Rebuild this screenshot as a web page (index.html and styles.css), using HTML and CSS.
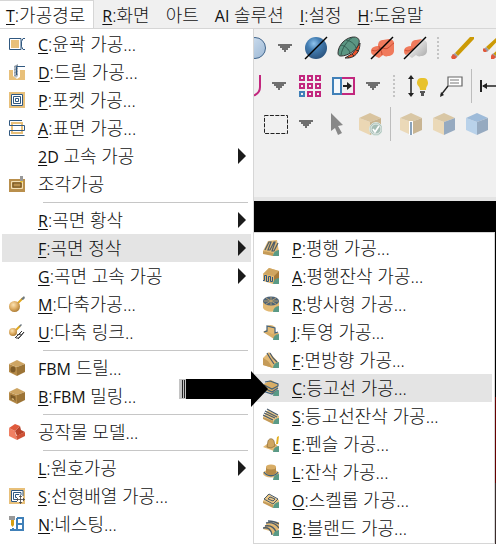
FILE: index.html
```html
<!DOCTYPE html>
<html lang="ko">
<head>
    <meta charset="UTF-8">
    <meta name="viewport" content="width=device-width, initial-scale=1.0">
    <title>가공경로</title>
    <link rel="stylesheet" href="styles.css">
</head>
<body>
    <!-- shared shapes -->
    <svg class="defs" aria-hidden="true">
        <defs>
            <radialGradient id="blueBall" cx="0.4" cy="0.3" r="0.7">
                <stop offset="0" stop-color="#8fc4ee"/>
                <stop offset="0.4" stop-color="#4580b5"/>
                <stop offset="1" stop-color="#2c5580"/>
            </radialGradient>
            <radialGradient id="tanBall" cx="0.4" cy="0.35" r="0.7">
                <stop offset="0" stop-color="#fbe3b4"/>
                <stop offset="0.5" stop-color="#e0b068"/>
                <stop offset="1" stop-color="#a87830"/>
            </radialGradient>
            <linearGradient id="paleBall" x1="0" y1="0" x2="1" y2="1">
                <stop offset="0" stop-color="#d5e4f3"/>
                <stop offset="1" stop-color="#9db8d4"/>
            </linearGradient>
            <linearGradient id="silver" x1="0" y1="0" x2="1" y2="1">
                <stop offset="0" stop-color="#ffffff"/>
                <stop offset="1" stop-color="#a8a8a8"/>
            </linearGradient>
            <symbol id="corner" viewBox="0 0 16 16"><path d="M16 10v6h-6a6 6 0 0 1 6-6z" fill="#5a9a86"/></symbol>
            <symbol id="slab" viewBox="0 0 16 16">
                <path d="M0 9L5 2l11 6v3l-6 4z" fill="#e8c585"/>
                <path d="M0 9l10 4v3L0 11z" fill="#c59b58"/>
            </symbol>
            <symbol id="pencil" viewBox="0 0 24 24">
                <path d="M5 17L20 1h4v2L8 20z" fill="#cc9a05"/>
                <path d="M5 17l3 3-2 2-4-3z" fill="#9c9ca4"/>
                <path d="M3 18l4 3-2 2H2l-1-2z" fill="#e2583a"/>
            </symbol>
        </defs>
    </svg>

    <div class="app">
        <nav class="menubar">
            <button class="menubar-item active"><u>T</u>:가공경로</button>
            <button class="menubar-item"><u>R</u>:화면</button>
            <button class="menubar-item">아트</button>
            <button class="menubar-item"><span class="latin">AI</span> 솔루션</button>
            <button class="menubar-item"><u>I</u>:설정</button>
            <button class="menubar-item"><u>H</u>:도움말</button>
        </nav>

        <div class="toolbars">
            <div class="toolbar toolbar-view">
                <button class="tool" aria-label="음영"><svg viewBox="0 0 24 24"><circle cx="12" cy="12" r="10.5" fill="url(#paleBall)" stroke="#41658c"/></svg></button>
                <button class="drop" aria-label="음영 옵션"><svg viewBox="0 0 14 8"><path d="M0 0h14v2h-2v2h-2v2H8v2H6V6H4V4H2V2H0z"/></svg></button>
                <button class="tool" aria-label="솔리드 숨김"><svg viewBox="0 0 24 24"><circle cx="12" cy="12" r="11" fill="url(#blueBall)"/><path d="M1 23L23 1" stroke="#000" stroke-width="1.5"/></svg></button>
                <button class="tool" aria-label="서피스"><svg viewBox="0 0 24 24"><path d="M8 22c10 1 15-6 15-15L16 17z" fill="#e8532c" stroke="#333"/><path d="M1 17C1 9 9 1 17 1c4 0 6 3 5 6C20 15 10 20 4 20c-2 0-3-1-3-3z" fill="#5b9683" stroke="#333"/><path d="M4 9c4 1 8 4 9 8M9 4c5 1 9 4 10 8M4 19c1-7 6-14 12-18" fill="none" stroke="#2f574c" stroke-width=".9"/><path d="M10 20l2 2M15 18l2 2M19 14l3 1" stroke="#333"/></svg></button>
                <button class="tool" aria-label="모델 숨김"><svg viewBox="0 0 24 24"><path d="M1 14c1-3 4-4 7-4 0-4 2-6 5-6l6-1c3 0 5 2 5 4v8c0 3-3 5-6 5-2 1-4 0-5-1l-4 3-6-3c-2-1-2-3-2-5z" fill="#f07a5c"/><path d="M2 14c3 2 6 0 8-2 3-1 5 2 8 0s4-4 6-5M9 10c0 3 3 4 3 9" fill="none" stroke="#c94c33"/><path d="M1 23L23 1" stroke="#000" stroke-width="1.5"/></svg></button>
                <button class="tool" aria-label="공작물 숨김"><svg viewBox="0 0 24 24"><path d="M1 14c1-3 4-4 7-4 0-4 2-6 5-6l6-1-9 11-7 5c-2-1-2-3-2-5z" fill="#f07a5c"/><path d="M21 4c2 1 3 2 3 4v7c0 3-3 5-6 5-2 1-4 0-5-1l-4 3-3-2z" fill="url(#silver)"/><path d="M2 14c3 2 6 0 8-2" fill="none" stroke="#c94c33"/><path d="M1 23L23 1" stroke="#000" stroke-width="1.5"/></svg></button>
                <span class="grip"></span>
                <button class="tool" aria-label="그리기"><svg viewBox="0 0 24 24"><use href="#pencil"/></svg></button>
                <button class="tool" aria-label="여러 개 그리기"><svg viewBox="0 0 24 24"><path d="M3 11L14 1h4L6 14zM10 18L24 5v7L14 21z" fill="#cc9a05"/><path d="M3 11l3 3-2 2-3-3zM10 17l4 4-1 1-4-3z" fill="#9c9ca4"/><path d="M1 12l3 3-1 1H1l-2-2zM9 18l4 3-2 2H8v-3z" fill="#e2583a"/></svg></button>
            </div>

            <div class="toolbar toolbar-layout">
                <button class="tool" aria-label="곡선"><svg viewBox="0 0 24 24"><path d="M2 1v12c0 6 10 10 16 8 4-2 5-5 5-8V1" fill="none" stroke="#c2277e" stroke-width="2"/></svg></button>
                <button class="drop" aria-label="곡선 옵션"><svg viewBox="0 0 14 8"><path d="M0 0h14v2h-2v2h-2v2H8v2H6V6H4V4H2V2H0z"/></svg></button>
                <button class="tool" aria-label="배열"><svg viewBox="0 0 24 24"><g fill="none" stroke="#c2277e" stroke-width="2"><path d="M2 2h4v4H2zM10 2h4v4h-4zM18 2h4v4h-4zM2 10h4v4H2zM10 10h4v4h-4zM18 10h4v4h-4zM10 18h4v4h-4zM18 18h4v4h-4z"/><path d="M2 18h4v4H2z" stroke="#4080b8"/></g></svg></button>
                <button class="tool" aria-label="창 나누기"><svg viewBox="0 0 24 24"><path d="M11 4h12v16H11" fill="none" stroke="#c2277e" stroke-width="2"/><path d="M2 4h8v16H2z" fill="#f5f8fb" stroke="#4080b8" stroke-width="2"/><path d="M12 11h4V8l5 4-5 4v-3h-4z" fill="#222"/></svg></button>
                <button class="drop" aria-label="창 옵션"><svg viewBox="0 0 14 8"><path d="M0 0h14v2h-2v2h-2v2H8v2H6V6H4V4H2V2H0z"/></svg></button>
                <span class="grip"></span>
                <button class="tool" aria-label="높이 표시"><svg viewBox="0 0 24 24"><path d="M5 3v18" stroke="#222" stroke-width="1.5"/><path d="M5 1l3 4H2zM5 23l3-4H2z" fill="#222"/><path d="M15 4h3c3 0 4 3 4 5 0 3-2 3-2 7h-6c0-4-3-4-3-7 0-2 1-5 4-5z" fill="#e8c22c"/><path d="M14 17h5v2h-1v3h-3v-3h-1z" fill="#555"/></svg></button>
                <button class="tool" aria-label="설명"><svg viewBox="0 0 24 24"><path d="M9 3h14v9H9z" fill="#fff" stroke="#666" stroke-width="1.2"/><path d="M11 6h9M11 9h9" stroke="#777"/><path d="M9 12l-7 9" stroke="#222" stroke-width="1.3"/><path d="M1 23l1-5 3 3z" fill="#222"/></svg></button>
                <span class="divider"></span>
                <button class="tool" aria-label="치수"><svg viewBox="0 0 24 24"><path d="M1 6v12" stroke="#222" stroke-width="2"/><path d="M3 12h21" stroke="#222" stroke-width="1.5"/><path d="M2 12l5-3v6z" fill="#222"/></svg></button>
            </div>

            <div class="toolbar toolbar-select">
                <button class="tool" aria-label="영역 선택"><svg viewBox="0 0 24 24"><path d="M.5 3.500h23v18h-23z" fill="none" stroke="#222" stroke-dasharray="4 1.400"/></svg></button>
                <button class="drop" aria-label="선택 옵션"><svg viewBox="0 0 14 8"><path d="M0 0h14v2h-2v2h-2v2H8v2H6V6H4V4H2V2H0z"/></svg></button>
                <button class="tool" aria-label="선택"><svg viewBox="0 0 24 24"><path d="M6 1l12 12-5 1 4 7-4 2-3-7-4 3z" fill="#888"/></svg></button>
                <button class="tool" aria-label="솔리드 확인"><svg viewBox="0 0 24 24"><path d="M1 6l11 4v13L1 18z" fill="#ebd7b4"/><path d="M1 6l11-5 11 5-11 4z" fill="#d9c49f"/><path d="M12 10l11-4v12l-11 5z" fill="#c8b38e"/><circle cx="18" cy="17" r="6.500" fill="#a5bdb5" stroke="#dce8e3"/><circle cx="18" cy="17" r="5" fill="none" stroke="#fff" stroke-width=".7"/><path d="M15 17l2 3 4-6" fill="none" stroke="#fff" stroke-width="1.700"/></svg></button>
                <span class="divider"></span>
                <button class="tool" aria-label="모서리 선택"><svg viewBox="0 0 24 24"><path d="M1 6l11 4v13L1 18z" fill="#ebd9b8"/><path d="M1 6l11-5 11 5-11 4z" fill="#d9c7a5"/><path d="M12 10l11-4v12l-11 5z" fill="#c9b593"/><path d="M10 9h4v14h-4z" fill="#fff"/><path d="M11 10h2v13h-2z" fill="#8ba3ba"/></svg></button>
                <button class="tool" aria-label="면 선택"><svg viewBox="0 0 24 24"><path d="M1 6l11 4v13L1 18z" fill="#ebd9b8"/><path d="M1 6l11-5 11 5-11 4z" fill="#d9c7a5"/><path d="M12 10l11-4v12l-11 5z" fill="#96aac0"/></svg></button>
                <button class="tool" aria-label="솔리드 선택"><svg viewBox="0 0 24 24"><path d="M1 6l11 4v13L1 18z" fill="#b9d2ea"/><path d="M1 6l11-5 11 5-11 4z" fill="#9ebbd9"/><path d="M12 10l11-4v12l-11 5z" fill="#96aac0"/></svg></button>
            </div>
        </div>

        <main class="viewport"></main>

        <div class="menu main-menu">
            <button class="row"><svg class="icon" viewBox="0 0 16 16"><path d="M2 4h8v8H2z" fill="#e8c07a"/><path d="M12 2.500H.5v11H12z" fill="none" stroke="#305880"/><path d="M2 4h8v8H2z" fill="#e8c07a"/><path d="M16 2.500h-2l-1.500 3v5l1.500 3h2" fill="none" stroke="#305880"/></svg><span><u>C</u>:윤곽 가공...</span></button>
            <button class="row"><svg class="icon" viewBox="0 0 16 16"><path d="M0 6h16v10H0z" fill="#e8c07a"/><path d="M4 4h7v9l-3 2-4-3z" fill="#fff"/><path d="M5 2l4-2v12l-2 2-2-2z" fill="#b4bcc4"/><path d="M5 3l4-2M5 6l4-2M5 9l4-2M5 12l4-2" stroke="#8a949e"/><path d="M7.500 11V2.500H16" fill="none" stroke="#305880"/></svg><span><u>D</u>:드릴 가공...</span></button>
            <button class="row"><svg class="icon" viewBox="0 0 16 16"><path d="M0 0h16v16H0z" fill="#e8c07a"/><path d="M2 2h12v12H2z" fill="#fff"/><path d="M2.500 2.500h11v11h-11zM4.500 4.500h7v7h-7zM6.500 6.500h3v3h-3z" fill="none" stroke="#305880"/></svg><span><u>P</u>:포켓 가공...</span></button>
            <button class="row"><svg class="icon" viewBox="0 0 16 16"><path d="M3 3h10v10H3z" fill="none" stroke="#e8c07a" stroke-width="2"/><path d="M13 .5H.5v5h15v5H.5v5h15" fill="none" stroke="#305880"/></svg><span><u>A</u>:표면 가공...</span></button>
            <button class="row has-sub"><span><u>2</u><span class="latin">D</span> 고속 가공</span></button>
            <button class="row"><svg class="icon" viewBox="0 0 16 16"><path d="M0 3h16v13H0z" fill="#b98f4c"/><path d="M2.500 5.500h11v7h-11z" fill="#b98f4c" stroke="#f3dfb4"/><path d="M4 7h8v4H4z" fill="none" stroke="#6a4c1c"/><path d="M11 0h3v5h-3z" fill="#999"/><path d="M11 5h3l-1.500 2z" fill="#e8c22c"/></svg><span>조각가공</span></button>
            <hr>
            <button class="row has-sub"><span><u>R</u>:곡면 황삭</span></button>
            <button class="row has-sub selected"><span><u>F</u>:곡면 정삭</span></button>
            <button class="row has-sub"><span><u>G</u>:곡면 고속 가공</span></button>
            <button class="row"><svg class="icon" viewBox="0 0 16 16"><path d="M8 8l6-6" stroke="#e0a820" stroke-width="2"/><path d="M12 3l3-3 1 2-2 2z" fill="#6d7880"/><circle cx="5.500" cy="10.500" r="5.500" fill="url(#tanBall)"/></svg><span><u>M</u>:다축가공...</span></button>
            <button class="row"><svg class="icon" viewBox="0 0 16 16"><path d="M7 6l4-4" stroke="#e0a820" stroke-width="2"/><path d="M10 2l2-2 1 1-2 2z" fill="#6d7880"/><circle cx="4" cy="8" r="4" fill="url(#tanBall)"/><path d="M6 14l7-7M9 15l6-7M8 11l4-1M7 14h3l5-6" fill="none" stroke="#333"/></svg><span><u>U</u>:다축 링크..</span></button>
            <hr>
            <button class="row"><svg class="icon" viewBox="0 0 16 16"><path d="M0 4l8 3v9l-8-4z" fill="#b58a48"/><path d="M0 4l8-4 8 4-8 3z" fill="#cda462"/><path d="M8 7l8-3v8l-8 4z" fill="#9c7436"/><ellipse cx="4" cy="9.500" rx="2.500" ry="3" fill="#7d5b28"/></svg><span><span class="latin">FBM</span> 드릴...</span></button>
            <button class="row"><svg class="icon" viewBox="0 0 16 16"><path d="M0 4l8 3v9l-8-4z" fill="#b58a48"/><path d="M0 4l8-4 8 4-8 3z" fill="#cda462"/><path d="M8 7l8-3v8l-8 4z" fill="#9c7436"/><path d="M1.500 6.500l5 2v5l-5-2z" fill="#7d5b28"/><path d="M2 11l2-1 2 3z" fill="#dbb878"/></svg><span><u>B</u>:<span class="latin">FBM</span> 밀링...</span></button>
            <hr>
            <button class="row"><svg class="icon" viewBox="0 0 16 16"><path d="M0 4l6 3 2 9-8-4z" fill="#f07f62"/><path d="M0 4l6-4 5 2-5 5z" fill="#e05a3c"/><path d="M6 7l5-5 1 4 4 2-8 4z" fill="#b8432a"/><path d="M7 12l9-4v4l-8 4z" fill="#cf5236"/></svg><span>공작물 모델...</span></button>
            <hr>
            <button class="row has-sub"><span><u>L</u>:원호가공</span></button>
            <button class="row"><svg class="icon" viewBox="0 0 16 16"><path d="M0 0h16v16H0z" fill="#e8c07a"/><path d="M2 2h12v12H2z" fill="#fff"/><path d="M14 8V2.500H2.500v11H8M12 7V4.500H4.500v7H8M10 7V6.500H6.500v3H8" fill="none" stroke="#305880"/><path d="M11.500 7v9M7 11.500h9M10 8.500h3M10 14.500h3M8.500 10v3M14.500 10v3" stroke="#444" stroke-width=".8"/></svg><span><u>S</u>:선형배열 가공...</span></button>
            <button class="row"><svg class="icon" viewBox="0 0 16 16"><path d="M8 2h6v12H1M8 8h6M8 2v12M4 12v2" fill="none" stroke="#4080b8" stroke-width="2"/><path d="M0 0h6v4H0z" fill="#999"/><path d="M2 4h3v5L3.500 11 2 9z" fill="#d8a010"/></svg><span><u>N</u>:네스팅...</span></button>
        </div>

        <div class="menu sub-menu">
            <button class="row"><svg class="icon" viewBox="0 0 16 16"><path d="M0 11L5 1l9-1 2 12-6 4z" fill="#e2b974"/><path d="M0 11l10 2v3L0 14z" fill="#c59b58"/><path d="M2 10l4-8h2L5 10h2l4-8h1L9 11h2l4-8" fill="none" stroke="#4a5b6a" stroke-width="1.200"/><use href="#corner"/></svg><span><u>P</u>:평행 가공...</span></button>
            <button class="row"><svg class="icon" viewBox="0 0 16 16"><path d="M0 6l6-6 10 3v9l-6 4-10-3z" fill="#e2b974"/><path d="M0 6l6-6 10 3-5 5z" fill="#cfa560"/><path d="M11 8l5-5v9l-5 3z" fill="#a87c3a"/><path d="M0 12.500h1.500V7.500h2v6h2v-5h2v5h2V9" fill="none" stroke="#305880"/><use href="#corner"/></svg><span><u>A</u>:평행잔삭 가공...</span></button>
            <button class="row"><svg class="icon" viewBox="0 0 16 16"><path d="M0 5h16v7c-3 5-13 5-16 0z" fill="#e2b974"/><ellipse cx="8" cy="5" rx="8" ry="4.500" fill="#4e6478"/><path d="M8 1v8M1 5h14M3 2l10 6M13 2L3 8" stroke="#c9a86c" stroke-width=".8"/><use href="#corner"/></svg><span><u>R</u>:방사형 가공...</span></button>
            <button class="row"><svg class="icon" viewBox="0 0 16 16"><path d="M0 8l5-3 11 4-5 6z" fill="#d8ad66"/><path d="M4 2c3-2 6-1 8 1v6l-3 1-5-3z" fill="#e2b974"/><path d="M1 8l3-1V2l8 2v5l3-1" fill="none" stroke="#41617c" stroke-width="1.200"/><use href="#corner"/></svg><span><u>J</u>:투영 가공...</span></button>
            <button class="row"><svg class="icon" viewBox="0 0 16 16"><path d="M0 6l6-6 10 11-6 5-10-3z" fill="#e2b974"/><path d="M0 6l5 3 5 7-10-3z" fill="#c59b58"/><path d="M4 1l3 5 4 6M7 1l3 5 4 4" fill="none" stroke="#4a5b6a" stroke-width="1.200"/><use href="#corner"/></svg><span><u>F</u>:면방향 가공...</span></button>
            <button class="row selected"><svg class="icon" viewBox="0 0 16 16"><path d="M1 4l7-4 7 4v4l-5 6-9-4z" fill="#d8ad66"/><path d="M2 2l5-1 8 3v2l-6 3-8-4M1 8l8 4 6-4M0 11l9 3 6-4" fill="none" stroke="#41617c" stroke-width="1.200"/><use href="#corner"/></svg><span><u>C</u>:등고선 가공...</span></button>
            <button class="row"><svg class="icon" viewBox="0 0 16 16"><use href="#slab"/><path d="M0 7l10 5M1 5l11 5M2 3l12 6M4 1l11 6" stroke="#4a5b6a" stroke-width="1.200"/><use href="#corner"/></svg><span><u>S</u>:등고선잔삭 가공...</span></button>
            <button class="row"><svg class="icon" viewBox="0 0 16 16"><path d="M0 11l4-3h9l3 4-5 3z" fill="#e2b974"/><path d="M4 11l1-6c1-3 5-3 6 0l1 5-4 2z" fill="#cfa560" stroke="#8a6a38" stroke-width=".7"/><path d="M13 8l1-7 2-1-1 8z" fill="#e5b020"/><use href="#corner"/></svg><span><u>E</u>:펜슬 가공...</span></button>
            <button class="row"><svg class="icon" viewBox="0 0 16 16"><ellipse cx="8" cy="9.500" rx="8" ry="4" fill="#e2b974"/><path d="M3 3v6c2 3 8 3 10 0V3z" fill="#b58a48"/><path d="M1 8c3 5 11 5 14 0" fill="none" stroke="#41617c" stroke-width="1.300"/><ellipse cx="8" cy="3" rx="5" ry="2.500" fill="#d8ad66"/><use href="#corner"/></svg><span><u>L</u>:잔삭 가공...</span></button>
            <button class="row"><svg class="icon" viewBox="0 0 16 16"><use href="#slab"/><path d="M1 7l5-5 9 5-5 5zM5 7l2-2 5 2-2 2z" fill="none" stroke="#4a5b6a"/><use href="#corner"/></svg><span><u>O</u>:스켈롭 가공...</span></button>
            <button class="row"><svg class="icon" viewBox="0 0 16 16"><path d="M0 9l4-6 12-1v7l-6 6-3-4z" fill="#e2b974"/><path d="M0 8c5-1 8 1 9 7M2 6c5-1 9 1 11 6M3 3c5-1 10 1 13 5M5 1c4 0 8 1 11 3" fill="none" stroke="#4a5b6a" stroke-width="1.300"/><use href="#corner"/></svg><span><u>B</u>:블랜드 가공...</span></button>
        </div>

        <!-- arrow pointing at the contour entry -->
        <svg class="pointer" viewBox="0 0 89 38">
            <path d="M0 9h8v20H0z" fill="#c4c4c4"/>
            <path d="M3.500 10v18M5.500 10v18" stroke="#222"/>
            <path d="M7 9h65V1l17 18-17 18v-8H7z" fill="#000"/>
        </svg>
    </div>
</body>
</html>
```
FILE: styles.css
```css
* {
    box-sizing: border-box;
}
body {
    margin: 0;
    font-family: "Open Sans", "Noto Sans CJK KR", sans-serif;
    font-size: 18px;
    font-weight: 300;
    color: #111;
    background-color: #f0f0f0;
}
button {
    margin: 0;
    padding: 0;
    border: 0;
    background: none;
    font: inherit;
    color: inherit;
    white-space: nowrap;
    cursor: default;
}
u, .latin {
    font-size: 16px;
    font-weight: 400;
}
u {
    text-decoration-thickness: 1px;
    text-underline-offset: 2px;
}
.defs {
    position: absolute;
    width: 0;
    height: 0;
}
.app {
    position: relative;
    display: flex;
    flex-direction: column;
    height: 100vh;
    overflow: hidden;
}

/* menu bar */
.menubar {
    display: flex;
    height: 29px;
    border-bottom: 1px solid #d6d6d6;
}
.menubar-item {
    padding: 0 8px;
    line-height: 28px;
    border-top: 1px solid transparent;
}
.menubar-item.active {
    padding-left: 6px;
    background-color: #fff;
    border-top-color: #d6d6d6;
    border-right: 1px solid #d6d6d6;
}

/* toolbars */
.toolbars {
    padding-bottom: 54px;
    border-bottom: 4px solid #e4e4e4;
}
.toolbar {
    display: flex;
    align-items: center;
    height: 38px;
}
.toolbar-view {
    padding-left: 238px;
}
.toolbar-layout {
    padding-left: 232px;
}
.toolbar-select {
    padding-left: 259px;
}
.tool, .drop {
    display: flex;
    flex: none;
    align-items: center;
    justify-content: center;
    height: 100%;
}
.tool {
    width: 33px;
}
.tool svg {
    width: 24px;
    height: 24px;
}
.drop {
    width: 28px;
}
.drop svg {
    width: 14px;
    height: 8px;
    fill: #6f6f6f;
}
.grip {
    flex: none;
    width: 2px;
    height: 22px;
    margin: 0 6px;
    background: repeating-linear-gradient(#c4c4c4 0 2px, transparent 2px 4px);
}
.divider {
    flex: none;
    width: 1px;
    height: 34px;
    margin: 0 3px 0 4px;
    background-color: #bdbdbd;
}

.viewport {
    flex: 1;
    background: linear-gradient(#000 0 196px, #600 196px 282px, #3a2c2c 282px);
}

/* drop-down menus */
.menu {
    position: absolute;
    background-color: #fff;
    border: 1px solid #d6d6d6;
}
.main-menu {
    top: 29px;
    bottom: 0;
    left: 0;
    width: 254px;
    padding: 1px 2px;
    border-width: 0 1px 0 0;
}
.sub-menu {
    top: 232px;
    left: 253px;
    width: 242px;
    padding: 1px 2px 1px 1px;
}
.row {
    display: flex;
    align-items: center;
    width: 100%;
    height: 28px;
    padding-left: 36px;
    line-height: 28px;
}
.sub-menu .row {
    padding-left: 37px;
}
.row.selected {
    background-color: #e4e4e4;
}
.icon {
    flex: none;
    width: 16px;
    height: 16px;
    margin-left: -29px;
    margin-right: 13px;
}
.has-sub::after {
    content: "";
    margin-left: auto;
    margin-right: 5px;
    border: solid transparent;
    border-width: 8px 0 8px 8px;
    border-left-color: #1b1b1b;
}
.menu hr {
    height: 1px;
    margin: 4px 3px 3px 41px;
    border: 0;
    background-color: #c6c6c6;
}

.pointer {
    position: absolute;
    top: 370px;
    left: 179px;
    width: 89px;
    height: 38px;
}
```
